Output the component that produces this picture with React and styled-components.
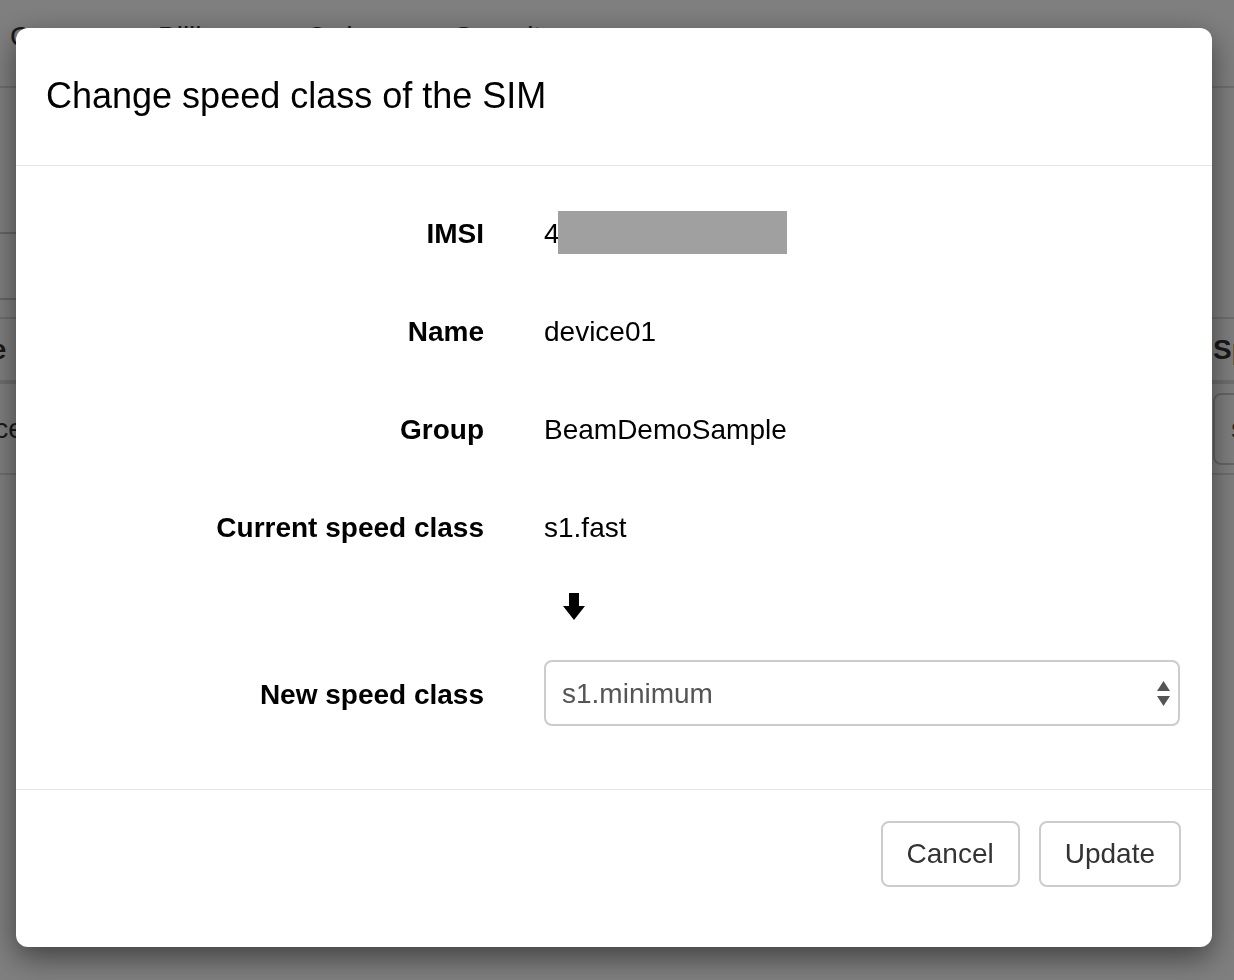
import React from "react";
import styled, { createGlobalStyle } from "styled-components";

const GlobalStyle = createGlobalStyle`
  html, body {
    margin: 0;
    padding: 0;
    background: #fff;
    overflow: hidden;
  }
  body {
    font-family: "Liberation Sans", Arial, Helvetica, sans-serif;
    color: #333;
  }
  * {
    box-sizing: border-box;
  }
`;

/* ---------- page behind the modal ---------- */

const Page = styled.div`
  width: 1234px;
  height: 980px;
  overflow: hidden;
`;

const NavTabs = styled.ul`
  list-style: none;
  margin: 0;
  padding: 0 0 0 10px;
  height: 88px;
  display: flex;
  border-bottom: 2px solid #ddd;

  li {
    width: 148px;
    padding-top: 17px;
    font-size: 28px;
    line-height: 40px;
    color: #333;
  }
`;

const Toolbar = styled.div`
  height: 229px;
  padding-top: 144px;
`;

const SearchBox = styled.div`
  width: 420px;
  height: 68px;
  margin-left: -10px;
  border: 2px solid #ccc;
  border-radius: 8px;
`;

const Table = styled.div`
  margin-left: -73px;
  display: grid;
  grid-template-columns: 1270px 320px;
  border-top: 2px solid #ddd;
`;

const HeadCell = styled.div`
  height: 65px;
  padding: 0 16px;
  display: flex;
  align-items: center;
  font-size: 28px;
  font-weight: 700;
  color: #333;
  border-bottom: 4px solid #ddd;
`;

const Cell = styled.div`
  height: 91px;
  padding: 0 16px;
  display: flex;
  align-items: center;
  font-size: 28px;
  color: #333;
  border-bottom: 2px solid #ddd;
`;

const CellSelect = styled.div`
  width: 260px;
  height: 72px;
  border: 2px solid #ccc;
  border-radius: 8px;
  padding-left: 16px;
  display: flex;
  align-items: center;
  color: #555;
`;

/* ---------- modal ---------- */

const Backdrop = styled.div`
  position: fixed;
  inset: 0;
  background: rgba(0, 0, 0, 0.5);
`;

const ModalLayer = styled.div`
  position: fixed;
  inset: 0;
  padding: 28px 0 0 16px;
`;

const Dialog = styled.div`
  width: 1196px;
  background: #fff;
  border-radius: 12px;
  box-shadow: 0 10px 30px rgba(0, 0, 0, 0.5);
  overflow: hidden;
`;

const Header = styled.div`
  padding: 42px 30px 43px;
  border-bottom: 1px solid #e5e5e5;
`;

const Title = styled.h4`
  margin: 0;
  font-size: 36px;
  line-height: 52px;
  font-weight: 400;
  color: #000;
`;

const Body = styled.div`
  padding: 32px 30px 63px;
  display: flex;
  flex-direction: column;
  gap: 30px;
`;

const FormGroup = styled.div`
  display: grid;
  grid-template-columns: 438px 1fr;
  column-gap: 60px;
  height: ${(p) => p.$height || 68}px;
`;

const Label = styled.label`
  padding-top: ${(p) => p.$top || 16}px;
  line-height: 40px;
  font-size: 28px;
  font-weight: 700;
  text-align: right;
  color: #000;
`;

const Value = styled.div`
  padding-top: 16px;
  height: 56px;
  line-height: 40px;
  font-size: 28px;
  color: #000;
  display: flex;
  align-items: center;
`;

const Redacted = styled.span`
  display: inline-block;
  width: 229px;
  height: 43px;
  margin: -3px 0 0 -2px;
  background: #a0a0a0;
`;

const ArrowWrap = styled.div`
  padding: 3px 0 0 19px;
`;

const SelectWrap = styled.div`
  position: relative;
  width: 636px;
  height: 66px;
`;

const Select = styled.select`
  appearance: none;
  -webkit-appearance: none;
  width: 100%;
  height: 100%;
  margin: 0;
  padding: 0 40px 0 16px;
  font-family: "Liberation Sans", Arial, Helvetica, sans-serif;
  font-size: 28px;
  color: #555;
  background: #fff;
  border: 2px solid #ccc;
  border-radius: 8px;
  outline: none;
`;

const SelectArrows = styled.svg`
  position: absolute;
  right: 10px;
  top: 21px;
  pointer-events: none;
`;

const Footer = styled.div`
  border-top: 1px solid #e5e5e5;
  padding: 31px 31px 60px;
  display: flex;
  justify-content: flex-end;
  gap: 19px;
`;

const Button = styled.button`
  height: 66px;
  padding: 0 24px;
  font-family: "Liberation Sans", Arial, Helvetica, sans-serif;
  font-size: 28px;
  color: #333;
  background: #fff;
  border: 2px solid #ccc;
  border-radius: 8px;
  cursor: pointer;
`;

const DownArrow = () => (
  <svg width="22" height="27" viewBox="0 0 22 27">
    <path d="M6 0 H16 V13 H22 L11 27 L0 13 H6 Z" fill="#000" />
  </svg>
);

const rows = [
  { label: "Name", value: "device01" },
  { label: "Group", value: "BeamDemoSample" },
  { label: "Current speed class", value: "s1.fast" },
];

const App = () => {
  return (
    <>
      <GlobalStyle />
      <Page>
        <NavTabs>
          <li>Coverage</li>
          <li>Billing</li>
          <li>Orders</li>
          <li>Security</li>
        </NavTabs>
        <Toolbar>
          <SearchBox />
        </Toolbar>
        <Table>
          <HeadCell>Type</HeadCell>
          <HeadCell>Speed class</HeadCell>
          <Cell>device</Cell>
          <Cell>
            <CellSelect>s1.fast</CellSelect>
          </Cell>
        </Table>
      </Page>

      <Backdrop />
      <ModalLayer>
        <Dialog>
          <Header>
            <Title>Change speed class of the SIM</Title>
          </Header>
          <Body>
            <FormGroup>
              <Label>IMSI</Label>
              <Value>
                4<Redacted />
              </Value>
            </FormGroup>
            {rows.map((r) => (
              <FormGroup key={r.label}>
                <Label>{r.label}</Label>
                <Value>{r.value}</Value>
              </FormGroup>
            ))}
            <FormGroup $height={40}>
              <div />
              <ArrowWrap>
                <DownArrow />
              </ArrowWrap>
            </FormGroup>
            <FormGroup $height={66}>
              <Label $top={15}>New speed class</Label>
              <SelectWrap>
                <Select defaultValue="s1.minimum">
                  <option value="s1.minimum">s1.minimum</option>
                  <option value="s1.slow">s1.slow</option>
                  <option value="s1.standard">s1.standard</option>
                  <option value="s1.fast">s1.fast</option>
                </Select>
                <SelectArrows width="13" height="25" viewBox="0 0 13 25">
                  <path d="M6.5 0 L13 10 H0 Z" fill="#555" />
                  <path d="M0 15 H13 L6.5 25 Z" fill="#555" />
                </SelectArrows>
              </SelectWrap>
            </FormGroup>
          </Body>
          <Footer>
            <Button>Cancel</Button>
            <Button>Update</Button>
          </Footer>
        </Dialog>
      </ModalLayer>
    </>
  );
};

export default App;
